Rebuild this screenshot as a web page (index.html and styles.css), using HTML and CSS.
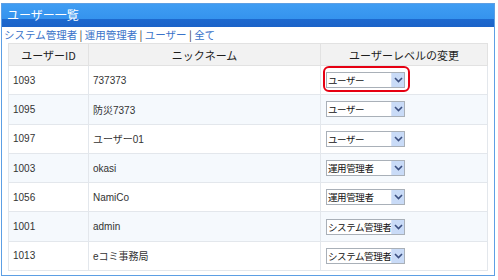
FILE: index.html
```html
<!DOCTYPE html>
<html lang="ja">
<head>
  <meta charset="UTF-8" />
  <title>ユーザー一覧</title>
  <link rel="stylesheet" href="styles.css">
</head>
<body>
  <div class="panel">
    <div class="panel-title">ユーザー一覧</div>

    <div class="filter">
      <a href="#">システム管理者</a> | <a href="#">運用管理者</a> | <a href="#">ユーザー</a> | <a href="#">全て</a>
    </div>

    <table class="users">
      <thead>
        <tr>
          <th class="col-id">ユーザーID</th>
          <th class="col-name">ニックネーム</th>
          <th class="col-level">ユーザーレベルの変更</th>
        </tr>
      </thead>
      <tbody>
        <tr>
          <td>1093</td>
          <td>737373</td>
          <td><span class="level marked"><span class="level-text">ユーザー</span><span class="level-arrow"><svg width="9" height="6" viewBox="0 0 9 6"><path d="M1 1 L4.5 4.5 L8 1" fill="none" stroke="#3b4f80" stroke-width="1.6"/></svg></span></span></td>
        </tr>
        <tr class="alt">
          <td>1095</td>
          <td>防災7373</td>
          <td><span class="level"><span class="level-text">ユーザー</span><span class="level-arrow"><svg width="9" height="6" viewBox="0 0 9 6"><path d="M1 1 L4.5 4.5 L8 1" fill="none" stroke="#3b4f80" stroke-width="1.6"/></svg></span></span></td>
        </tr>
        <tr>
          <td>1097</td>
          <td>ユーザー01</td>
          <td><span class="level"><span class="level-text">ユーザー</span><span class="level-arrow"><svg width="9" height="6" viewBox="0 0 9 6"><path d="M1 1 L4.5 4.5 L8 1" fill="none" stroke="#3b4f80" stroke-width="1.6"/></svg></span></span></td>
        </tr>
        <tr class="alt">
          <td>1003</td>
          <td>okasi</td>
          <td><span class="level"><span class="level-text">運用管理者</span><span class="level-arrow"><svg width="9" height="6" viewBox="0 0 9 6"><path d="M1 1 L4.5 4.5 L8 1" fill="none" stroke="#3b4f80" stroke-width="1.6"/></svg></span></span></td>
        </tr>
        <tr>
          <td>1056</td>
          <td>NamiCo</td>
          <td><span class="level"><span class="level-text">運用管理者</span><span class="level-arrow"><svg width="9" height="6" viewBox="0 0 9 6"><path d="M1 1 L4.5 4.5 L8 1" fill="none" stroke="#3b4f80" stroke-width="1.6"/></svg></span></span></td>
        </tr>
        <tr class="alt">
          <td>1001</td>
          <td>admin</td>
          <td><span class="level"><span class="level-text">システム管理者</span><span class="level-arrow"><svg width="9" height="6" viewBox="0 0 9 6"><path d="M1 1 L4.5 4.5 L8 1" fill="none" stroke="#3b4f80" stroke-width="1.6"/></svg></span></span></td>
        </tr>
        <tr>
          <td>1013</td>
          <td>eコミ事務局</td>
          <td><span class="level"><span class="level-text">システム管理者</span><span class="level-arrow"><svg width="9" height="6" viewBox="0 0 9 6"><path d="M1 1 L4.5 4.5 L8 1" fill="none" stroke="#3b4f80" stroke-width="1.6"/></svg></span></span></td>
        </tr>
      </tbody>
    </table>
  </div>
</body>
</html>
```

FILE: styles.css
```css
* {
  box-sizing: border-box;
}

body {
  margin: 0;
  background: #ffffff;
  font-family: "Liberation Sans", "Noto Sans CJK JP", sans-serif;
  color: #333333;
}

.panel {
  margin: 3px 0 0 1px;
  width: 494px;
  height: 273px;
  border: 1px solid #5d9fe4;
  background: #ffffff;
}

.panel-title {
  height: 23px;
  padding: 4px 0 0 5px;
  background: linear-gradient(to bottom, #3f9df3 0%, #3593ee 65%, #1d69cf 66%, #1b63c8 100%);
  color: #ffffff;
  font-size: 12px;
  line-height: 14px;
  font-family: "Noto Sans CJK JP", sans-serif;
}

.filter {
  height: 16px;
  padding-left: 2px;
  font-size: 10.5px;
  line-height: 16px;
  color: #333333;
  font-family: "Noto Sans CJK JP", sans-serif;
}

.filter a {
  color: #3a73c9;
  text-decoration: none;
}

.users {
  margin-left: 6px;
  width: 480px;
  border-collapse: collapse;
  border: 1px solid #dcdcdc;
  font-size: 10px;
}

.users th {
  height: 22px;
  background: #f2f2f2;
  border: 1px solid #e2e2e2;
  font-size: 11px;
  font-weight: normal;
  color: #1e1e1e;
  font-family: "Noto Sans CJK JP", sans-serif;
  text-align: center;
  padding: 0;
}

.col-id {
  width: 80px;
}

.col-name {
  width: 232px;
}

.users td {
  height: 29.3px;
  border: 1px solid #e3e7ec;
  padding: 0 0 0 4px;
  vertical-align: middle;
}

.users td:last-child {
  padding-left: 5px;
}

.users tr.alt td {
  background: #f5f9fd;
}

.level {
  position: relative;
  display: inline-flex;
  align-items: center;
  justify-content: space-between;
  width: 79px;
  height: 16px;
  border: 1px solid #a9b0b8;
  background: #ffffff;
  vertical-align: middle;
}

.level-text {
  padding-left: 1px;
  font-size: 9.5px;
  letter-spacing: -0.4px;
  color: #111111;
  white-space: nowrap;
  font-family: "Noto Sans CJK JP", sans-serif;
}

.level-arrow {
  flex: none;
  display: flex;
  align-items: center;
  justify-content: center;
  width: 13px;
  height: 14px;
  background: #c9dbf7;
  border-left: 1px solid #d8e4f8;
}

.level.marked::after {
  content: "";
  position: absolute;
  top: -7px;
  left: -4px;
  right: -6px;
  bottom: -5px;
  border: 2px solid #e60012;
  border-radius: 6px;
}
```
